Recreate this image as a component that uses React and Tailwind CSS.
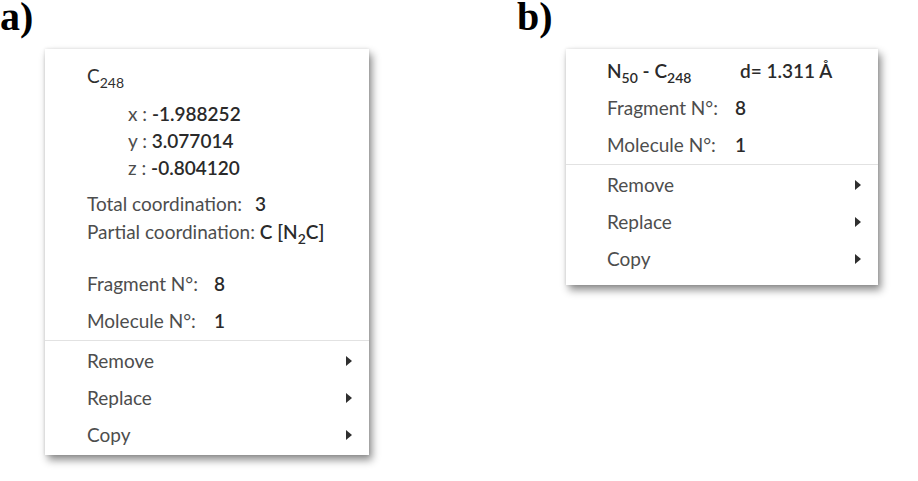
import React from "react";

const font = { fontFamily: "Lato, 'Noto Sans', sans-serif" };

function Arrow() {
  return (
    <svg width="6" height="10" viewBox="0 0 6 10" className="shrink-0">
      <path d="M0 0 L6 5 L0 10 Z" fill="#2f2f2f" />
    </svg>
  );
}

function MenuItem({ label }) {
  return (
    <div className="h-[37px] flex items-center justify-between pr-[17px]">
      <span className="text-[#4d4d4d]">{label}</span>
      <Arrow />
    </div>
  );
}

function Sub({ children }) {
  return <span className="text-[14px] relative top-[5px]">{children}</span>;
}

function Panel({ className, children }) {
  return (
    <div
      className={
        "bg-white shadow-[3px_5px_8px_rgba(0,0,0,0.45),0_0_3px_rgba(0,0,0,0.12)] text-[19px] leading-none " +
        className
      }
      style={font}
    >
      {children}
    </div>
  );
}

function Val({ children }) {
  return <span className="font-semibold text-[#2a2a2a]">{children}</span>;
}

export default function App() {
  return (
    <div className="w-[918px] h-[481px] bg-white flex overflow-hidden">
      {/* Column a */}
      <div className="w-[517px] shrink-0 flex flex-col">
        <div className="h-[49px]">
          <div
            className="-mt-[3px] text-[40px] leading-none font-bold text-black"
            style={{ fontFamily: "'Liberation Serif', serif" }}
          >
            a)
          </div>
        </div>
        <Panel className="ml-[45px] w-[324px] h-[406px] flex flex-col pt-[8px]">
          <div className="h-[37px] flex items-center pl-[42px] text-[#2f2f2f]">
            <span>
              C<Sub>248</Sub>
            </span>
          </div>
          <div className="mt-[6px] pl-[83px] flex flex-col text-[#4d4d4d]">
            <div className="h-[27px] flex items-center">
              x :&nbsp;<Val>-1.988252</Val>
            </div>
            <div className="h-[27px] flex items-center">
              y :&nbsp;<Val>3.077014</Val>
            </div>
            <div className="h-[27px] flex items-center">
              z :&nbsp;<Val>-0.804120</Val>
            </div>
          </div>
          <div className="mt-[8px] pl-[42px] flex flex-col text-[#4d4d4d]">
            <div className="h-[28px] flex items-center">
              <span className="w-[168px] shrink-0">Total coordination:</span>
              <Val>3</Val>
            </div>
            <div className="h-[28px] flex items-center">
              <span>Partial coordination:&nbsp;</span>
              <Val>
                C [N<Sub>2</Sub>C]
              </Val>
            </div>
          </div>
          <div className="mt-[20px] pl-[42px] flex flex-col text-[#4d4d4d]">
            <div className="h-[37px] flex items-center">
              <span className="w-[127px] shrink-0">Fragment N°:</span>
              <Val>8</Val>
            </div>
            <div className="h-[37px] flex items-center">
              <span className="w-[127px] shrink-0">Molecule N°:</span>
              <Val>1</Val>
            </div>
          </div>
          <div className="h-px bg-[#e2e2e2] mt-px" />
          <div className="pl-[42px] mt-px flex flex-col">
            <MenuItem label="Remove" />
            <MenuItem label="Replace" />
            <MenuItem label="Copy" />
          </div>
        </Panel>
      </div>

      {/* Column b */}
      <div className="flex-1 flex flex-col">
        <div className="h-[49px]">
          <div
            className="-mt-[3px] text-[40px] leading-none font-bold text-black"
            style={{ fontFamily: "'Liberation Serif', serif" }}
          >
            b)
          </div>
        </div>
        <Panel className="ml-[49px] w-[312px] h-[236px] flex flex-col pt-[3px]">
          <div className="pl-[41px] flex flex-col text-[#4d4d4d]">
            <div className="h-[37px] flex items-center font-semibold text-[#2a2a2a]">
              <span className="w-[133px] shrink-0">
                N<Sub>50</Sub> - C<Sub>248</Sub>
              </span>
              <span>d= 1.311 Å</span>
            </div>
            <div className="h-[37px] flex items-center">
              <span className="w-[128px] shrink-0">Fragment N°:</span>
              <Val>8</Val>
            </div>
            <div className="h-[37px] flex items-center">
              <span className="w-[128px] shrink-0">Molecule N°:</span>
              <Val>1</Val>
            </div>
          </div>
          <div className="h-px bg-[#e2e2e2] mt-px" />
          <div className="pl-[41px] mt-px flex flex-col">
            <MenuItem label="Remove" />
            <MenuItem label="Replace" />
            <MenuItem label="Copy" />
          </div>
        </Panel>
      </div>
    </div>
  );
}
